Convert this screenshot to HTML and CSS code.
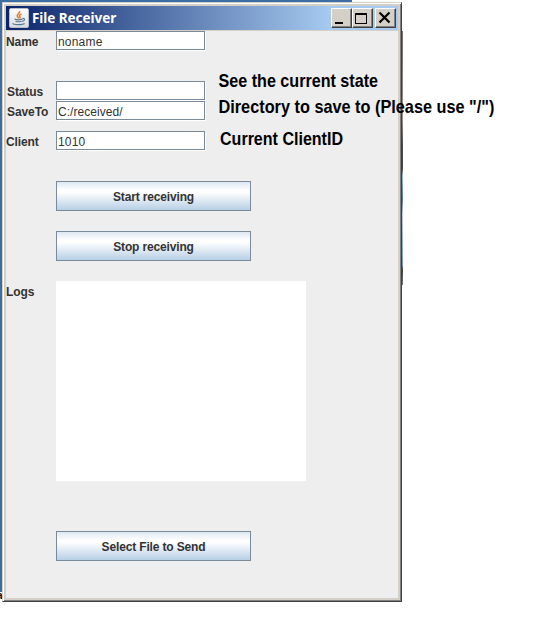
FILE: index.html
```
<!DOCTYPE html>
<html lang="en">
<head>
<meta charset="utf-8">
<title>File Receiver</title>
<link rel="stylesheet" href="styles.css">
</head>
<body>
<div class="desktop"><span class="desktop-text">a</span></div>
<div class="photo-edge"></div>
<main class="window">
  <header class="titlebar">
    <svg class="java-icon" width="20" height="20" viewBox="0 0 20 20">
      <defs><linearGradient id="tile" x2="0" y2="1"><stop stop-color="#fff"/><stop offset="1" stop-color="#d9dcdf"/></linearGradient></defs>
      <rect x=".5" y=".5" width="19" height="19" rx="1.5" fill="url(#tile)" stroke="#b5bdca"/>
      <path d="M10.5 3c1 2-3 3-2.200 5.200.2 1 1.200 1.400 1.200 2.300M12.500 6c-2 .8-2.800 1.600-1.600 2.700.5.6.2 1.200-.4 1.800" fill="none" stroke="#e87b2b" stroke-width="1.500"/>
      <path d="M5.500 11c2 .9 6 .8 8 0M6.500 13.200c2 .7 4.500.6 6.200 0M4 15.300c-1 1.600 10 1.800 11.500 0M13.500 10.500c3-.5 2.500 2.300-.3 2.800" fill="none" stroke="#56778f" stroke-width="1.200"/>
    </svg>
    <h1 class="title">File Receiver</h1>
    <div class="controls">
      <button class="control" aria-label="Minimize"><svg width="19" height="18"><path d="M3 13h8v2H3z"/></svg></button>
      <button class="control" aria-label="Maximize"><svg width="19" height="18"><path d="M2 4h12v11H2zM3 6v8h10V6z" fill-rule="evenodd"/></svg></button>
      <button class="control close" aria-label="Close"><svg width="19" height="18"><path d="M3.500 3.500l10 10M13.500 3.500l-10 10" stroke="#000" stroke-width="2.200"/></svg></button>
    </div>
  </header>
  <section class="form">
    <div class="row row-name"><label class="label">Name</label><div class="field">noname</div></div>
    <div class="row"><label class="label shifted">Status</label><div class="field"></div></div>
    <div class="row row-save"><label class="label shifted save-label">SaveTo</label><div class="field path">C:/received/</div></div>
    <div class="row row-client"><label class="label">Client</label><div class="field">1010</div></div>
    <button class="action start">Start receiving</button>
    <button class="action stop">Stop receiving</button>
    <div class="row row-logs"><label class="label">Logs</label><div class="logs"></div></div>
    <button class="action">Select File to Send</button>
  </section>
</main>
<svg class="notes" width="533" height="170">
  <text x="218.500" y="87" textLength="159.500" lengthAdjust="spacingAndGlyphs">See the current state</text>
  <text x="218.500" y="113" textLength="276" lengthAdjust="spacingAndGlyphs">Directory to save to (Please use "/")</text>
  <text x="220" y="145" textLength="123" lengthAdjust="spacingAndGlyphs">Current ClientID</text>
</svg>
</body>
</html>
```
FILE: styles.css
```
* { box-sizing: border-box; }
body {
  position: relative;
  width: 533px;
  height: 634px;
  margin: 0;
  padding: 2px;
  overflow: hidden;
  background: #fff;
  font-family: "Liberation Sans", Arial, sans-serif;
}
.desktop {
  position: absolute;
  left: 0;
  top: 0;
  width: 352px;
  height: 601px;
  background: #3a6ea5;
  clip-path: polygon(0 0, 100% 0, 100% 2px, 2px 2px, 2px 100%, 0 100%);
}
.desktop-text {
  position: absolute;
  left: 0;
  bottom: 0;
  width: 2px;
  height: 9px;
  overflow: hidden;
  background: #fff;
  font: bold 10px/8px "Liberation Sans", sans-serif;
  text-indent: -3px;
}
.photo-edge {
  position: absolute;
  left: 402px;
  top: 31px;
  width: 1px;
  height: 254px;
  background: linear-gradient(#756e65, #9b9184 35%, #4c4c4b 45%, #444 54%, #9fb9d8 57%, #547aa8 66%, #b9cbe0 72%, #7596ce 92%, #444 94%, #777);
}
.window {
  position: relative;
  width: 400px;
  height: 600px;
  padding: 2px;
  background: #d4d0c8;
  border: 1px solid;
  border-color: #d4d0c8 #404040 #404040 #d4d0c8;
  box-shadow: inset 1px 1px #fff, inset -1px -1px #808080;
}
.titlebar {
  display: flex;
  align-items: center;
  height: 24px;
  margin: 1px;
  padding: 0 2px 0 3px;
  background: linear-gradient(90deg, #0a246a, #a6caf0 325px);
}
.java-icon { flex: none; }
.title {
  margin: 0 0 0 3px;
  color: #fff;
  font: bold 13.500px/20px "Noto Sans", sans-serif;
  letter-spacing: -.05px;
  white-space: nowrap;
}
.controls { display: flex; margin-left: auto; }
.control {
  width: 21px;
  height: 20px;
  padding: 0;
  border: 1px solid;
  border-color: #fff #404040 #404040 #fff;
  background: #d4d0c8;
  box-shadow: inset -1px -1px #808080;
}
.control svg { display: block; }
.close { margin-left: 2px; }
.form {
  height: 567px;
  margin: 0 1px;
  background: #eee;
  color: #333;
  font-size: 12px;
}
.row { display: grid; grid-template-columns: 50px 150px; height: 20px; }
.row-name { margin-bottom: 30px; }
.row-save { margin-bottom: 10px; }
.row-client { margin-bottom: 30px; }
.row-logs { grid-template-columns: 50px 250px; height: 200px; margin-bottom: 50px; }
.label { font-weight: bold; line-height: 22px; letter-spacing: -.1px; }
.shifted { padding-left: 1px; }
.field {
  height: 19px;
  width: 149px;
  padding-left: 1px;
  border: 1px solid #7a8a99;
  background: #fff;
  box-shadow: 1px 1px #fff;
  line-height: 20px;
  letter-spacing: .2px;
}
.path { letter-spacing: .05px; }
.action {
  display: block;
  width: 195px;
  height: 30px;
  margin: 0 0 0 50px;
  padding: 2px 0 0;
  border: 1px solid #7a8a99;
  background: linear-gradient(#dde8f3, #fff 30%, #fff 36%, #b8cfe5);
  color: #333;
  font: bold 12px/20px "Liberation Sans", Arial, sans-serif;
  letter-spacing: -.15px;
}
.start, .stop { margin-bottom: 20px; }
.logs { height: 200px; background: #fff; }
.notes { position: absolute; left: 0; top: 0; font: bold 19px "Liberation Sans", Arial, sans-serif; }
```
